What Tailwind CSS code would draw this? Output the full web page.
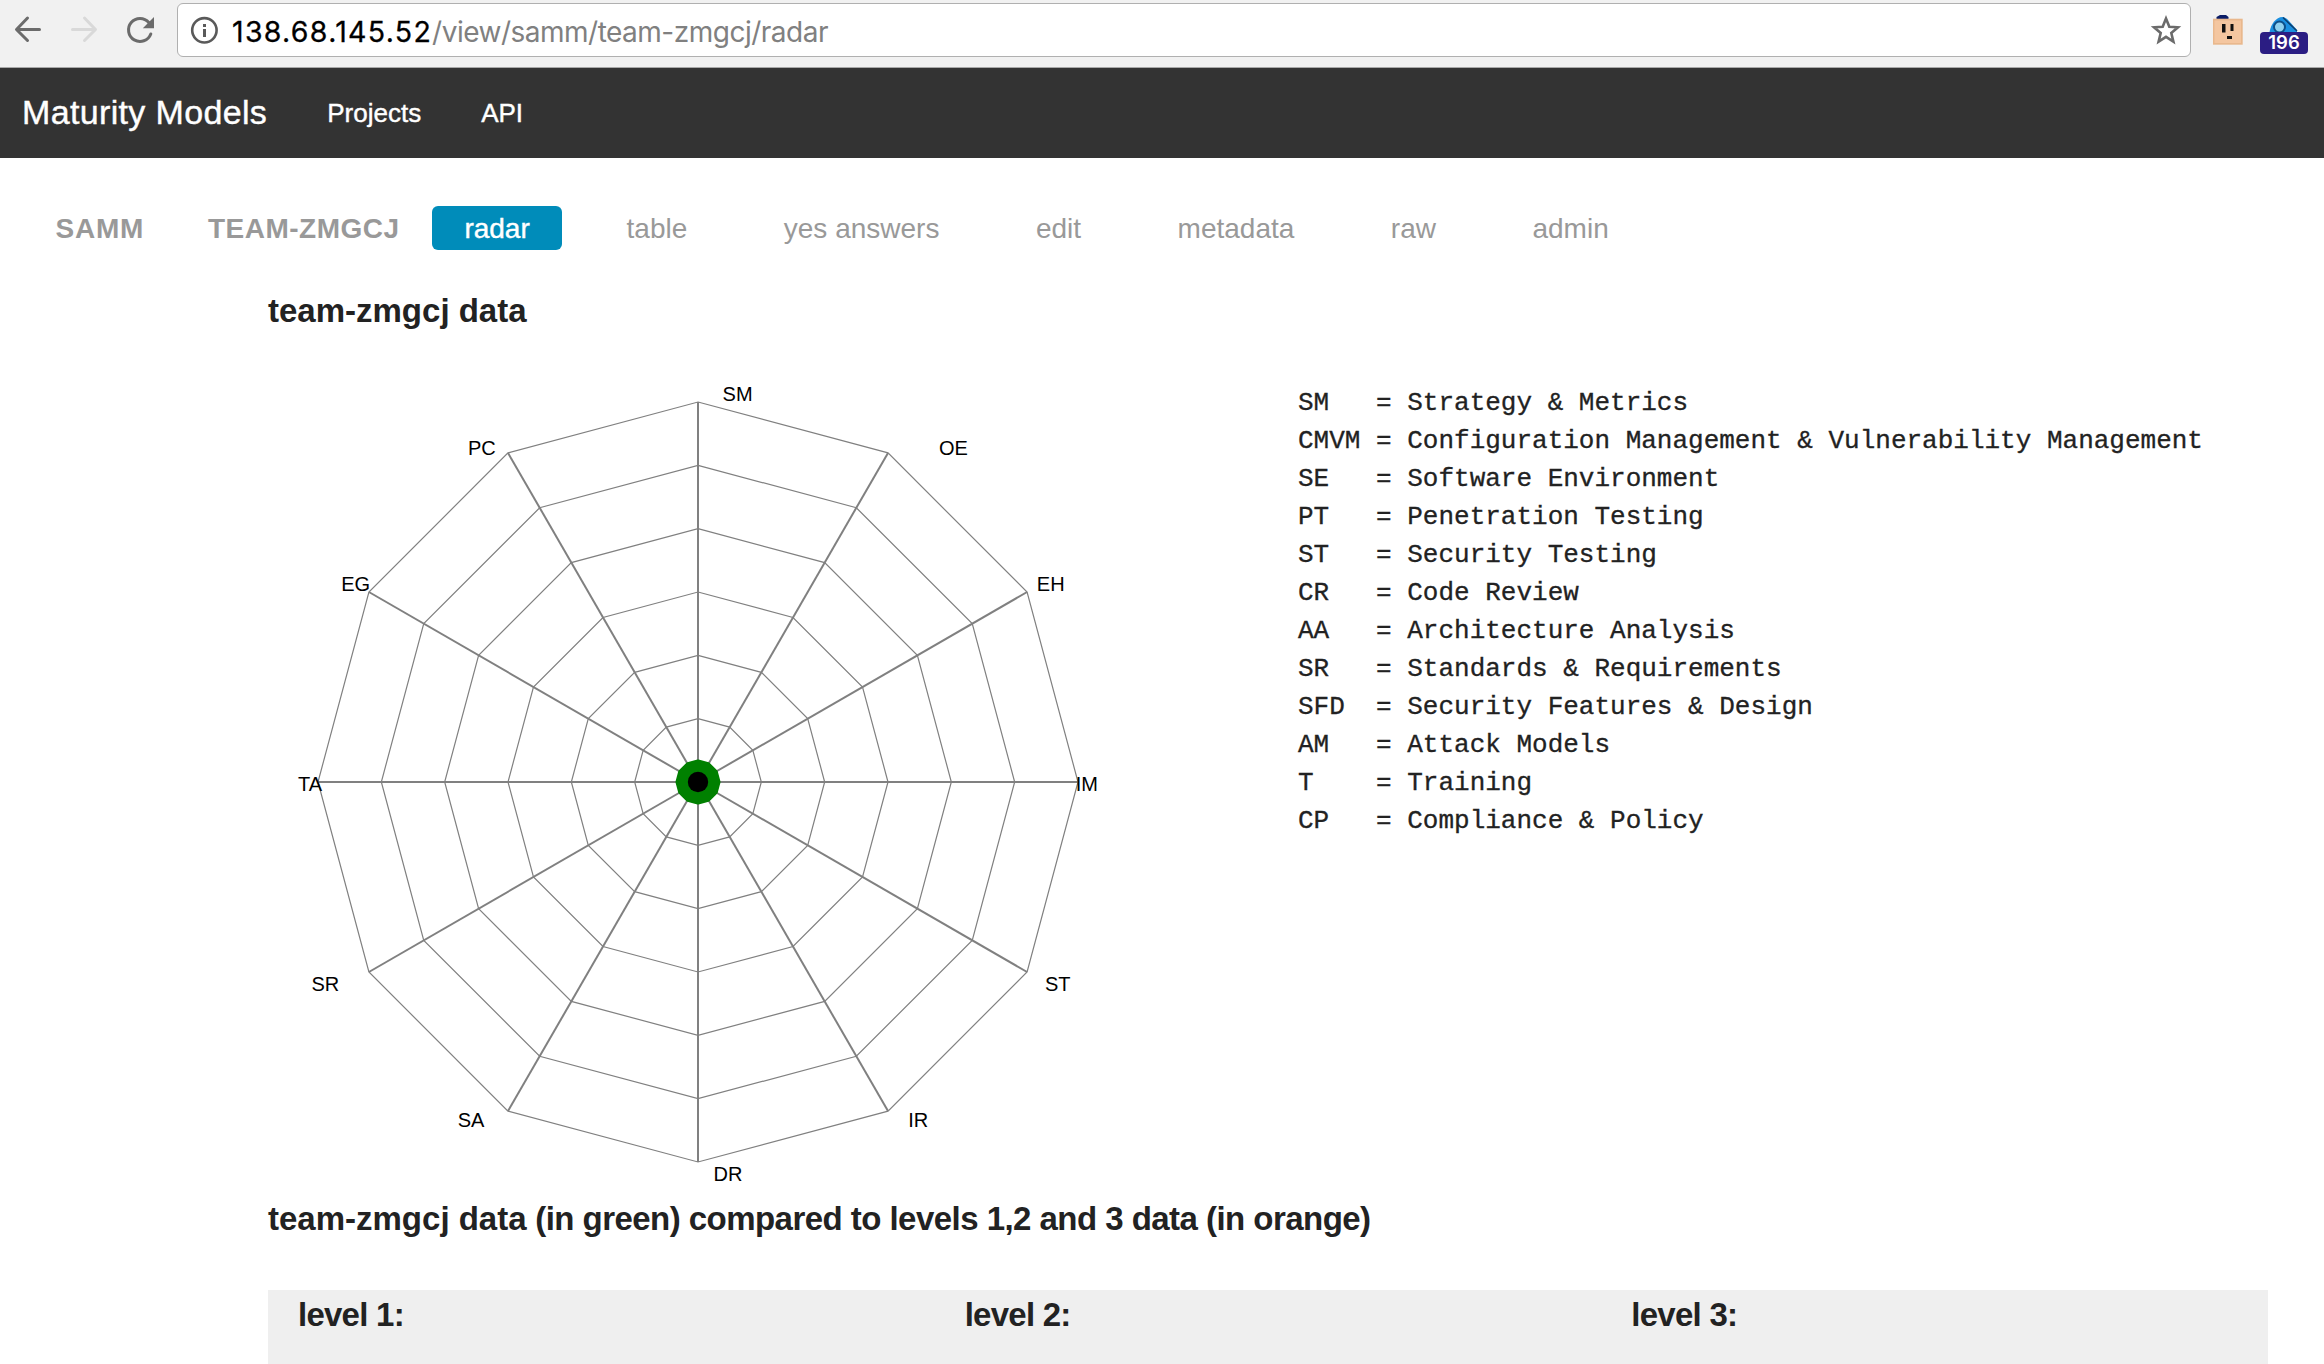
<!DOCTYPE html>
<html lang="en">
<head>
<meta charset="utf-8">
<title>Maturity Models</title>
<script src="https://cdn.jsdelivr.net/npm/@tailwindcss/browser@4"></script>
</head>
<body class="w-[2324px] h-[1364px] overflow-hidden bg-white font-['Liberation_Sans',Arial,sans-serif] text-[#222]">

<!-- Browser toolbar -->
<div class="flex h-[68px] items-start border-b border-[#a9a9a9] bg-[#f1f1f1]">
  <svg class="h-[60px] w-[177px] shrink-0" viewBox="0 0 177 60" fill="none" stroke="#6b6b6b" stroke-width="3" stroke-linecap="round" stroke-linejoin="round">
    <path d="M39.500 29.500H17M27.500 18L16.500 29.500L27.500 40.500"/>
    <path stroke="#d9d9d9" d="M72.500 29.500H95M84.500 18L95.500 29.500L84.500 40.500"/>
    <path d="M150.800 34A11.500 11.500 0 1 1 148.800 22.500"/>
    <path fill="#6b6b6b" stroke="none" d="M154 17V28.200H142.800Z"/>
  </svg>
  <div class="mt-[3px] flex h-[54px] w-[2014px] items-center rounded-md border border-[#b0b0b0] bg-white pl-3 pr-2">
    <svg class="h-7 w-7 shrink-0" viewBox="0 0 28 28"><circle cx="14.400" cy="14.300" r="12.200" fill="none" stroke="#5a5a5a" stroke-width="2.600"/><path fill="#5a5a5a" d="M13 8h3v3h-3zM13 13h3v8h-3z"/></svg>
    <div class="ml-[14px] pt-[3px] whitespace-pre font-['Inter',sans-serif] text-[28px] leading-[51px] tracking-[-0.5px] text-[#808080]"><span class="text-[28.500px] tracking-[1.3px] text-black [-webkit-text-stroke:0.3px_black]">138.68.145.52</span>/view/samm/team-zmgcj/radar</div>
    <svg class="ml-auto h-[32px] w-[32px]" viewBox="0 0 32 32"><path fill="none" stroke="#6b6b6b" stroke-width="2.600" d="M16 4.500L19.300 12.700L28 13.300L21.300 19L23.400 27.600L16 22.900L8.600 27.600L10.700 19L4 13.300L12.700 12.700Z"/></svg>
  </div>
  <svg class="ml-[21px] mt-[14px] h-8 w-8" viewBox="0 0 32 32"><path fill="#0b1c66" d="M4.500 3L8 1H14L16.500 3V6H4.500Z"/><path fill="#e9b88d" d="M1 4.700H30.700V30.700H1Z"/><path fill="#f4c6a0" d="M2.500 6.500H29V29H2.500Z"/><path fill="#111" d="M10 10h3.500v8.500H10zM18.500 10h3v7h-3zM15 22h5v3h-5z"/></svg>
  <div class="relative ml-[16px] mt-[15px] h-[40px] w-[52px]">
    <svg class="absolute left-2 top-0 h-5 w-9" viewBox="0 0 36 20"><path fill="#1a8fe0" d="M1.500 17C3 9 8 2 14.500 2C17 2 19 4 21 6L29 15V20H3Z"/><path stroke="#0c3f6e" stroke-width="1.500" d="M15 2.500L29 16"/><circle cx="11.500" cy="12" r="5.500" fill="#8fd0ee" stroke="#0c4f8a" stroke-width="2"/></svg>
    <div class="absolute left-0 top-[17px] flex h-[22px] w-[48px] items-center justify-center rounded-sm bg-[#2b1d83] font-['Inter',sans-serif] text-[18.500px] font-semibold text-white">196</div>
  </div>
</div>

<!-- Top bar -->
<nav class="flex h-[90px] items-center bg-[#333] pl-[22px] text-white [-webkit-text-stroke:0.4px_white]">
  <a class="text-[34px] leading-none tracking-[0.35px] pb-[2px]">Maturity Models</a>
  <a class="ml-[60px] text-[26px] leading-none">Projects</a>
  <a class="ml-[60px] text-[26px] leading-none">API</a>
</nav>

<!-- Section tabs -->
<div class="mt-12 flex h-11 items-center pl-[55.500px] text-[28px] leading-[44px] text-[#999]">
  <a class="pt-px font-bold tracking-[0.8px]">SAMM</a>
  <a class="ml-[63.700px] pt-px font-bold tracking-[0.5px]">TEAM-ZMGCJ</a>
  <div class="ml-[32.500px] flex h-11 gap-[32.500px] leading-[45px]">
    <a class="rounded-md bg-[#008cba] px-[32.300px] text-white [-webkit-text-stroke:0.4px_white]">radar</a>
    <a class="px-8">table</a>
    <a class="px-8">yes answers</a>
    <a class="px-8">edit</a>
    <a class="px-8">metadata</a>
    <a class="px-8">raw</a>
    <a class="px-8">admin</a>
  </div>
</div>

<main class="ml-[268px] w-[2000px]">
  <h2 class="mt-[37px] flex h-12 items-center text-[33px] font-bold">team-zmgcj data</h2>

  <div class="mt-[15px] flex h-[840px]">
    <svg class="h-[840px] w-[1000px] shrink-0 font-['Liberation_Sans',Arial,sans-serif] text-[20px]" viewBox="268 350 1000 840">
      <g id="grid" fill="none" stroke="#808080"></g>
      <g id="labels" fill="#000"></g>
    </svg>
    <pre class="mt-[34px] pl-[30px] font-['Liberation_Mono','Courier_New',monospace] text-[26px] leading-[38px] [-webkit-text-stroke:0.3px_#222]">SM   = Strategy &amp; Metrics
CMVM = Configuration Management &amp; Vulnerability Management
SE   = Software Environment
PT   = Penetration Testing
ST   = Security Testing
CR   = Code Review
AA   = Architecture Analysis
SR   = Standards &amp; Requirements
SFD  = Security Features &amp; Design
AM   = Attack Models
T    = Training
CP   = Compliance &amp; Policy</pre>
  </div>

  <h2 class="mt-[5px] h-12 whitespace-pre text-[33px] leading-[48px] font-bold">team-zmgcj data<span class="tracking-[-0.54px]"> (in green) compared to levels 1,2 and 3 data (in orange)</span></h2>

  <div class="mt-[47px] grid h-[80px] grid-cols-3 bg-[#efefef] pt-px text-[33px] font-bold leading-[48px] tracking-[-0.75px]">
    <div class="pl-[30px]">level 1:</div>
    <div class="pl-[30px]">level 2:</div>
    <div class="pl-[30px]">level 3:</div>
  </div>
</main>

<script>
  const cx = 698, cy = 782, R = 380, rings = 6, n = 12;
  const pt = (r, i) => {
    const a = i * 2 * Math.PI / n;
    return (cx + r * Math.sin(a)).toFixed(2) + ',' + (cy - r * Math.cos(a)).toFixed(2);
  };
  const poly = r => Array.from({ length: n }, (_, i) => pt(r, i)).join(' ');
  let g = '';
  for (let k = 1; k <= rings; k++) g += `<polygon points="${poly(R * k / rings)}" stroke-width="1.2"/>`;
  for (let i = 0; i < n; i++) g += `<path d="M${cx},${cy}L${pt(R, i)}" stroke-width="2"/>`;
  g += `<polygon points="${poly(20)}" fill="#008000" stroke="#008000" stroke-width="5" stroke-linejoin="round"/>`;
  g += `<circle cx="${cx}" cy="${cy}" r="10.2" fill="#000" stroke="none"/>`;
  document.getElementById('grid').innerHTML = g;
  const labels = [['SM', 722.6, 401], ['OE', 938.9, 455], ['EH', 1036.8, 591], ['IM', 1075.8, 791], ['ST', 1044.9, 991], ['IR', 908.2, 1127],
    ['DR', 713.5, 1181], ['SA', 457.7, 1127], ['SR', 311.4, 991], ['TA', 298, 791], ['EG', 341.2, 591], ['PC', 468, 455]];
  document.getElementById('labels').innerHTML = labels.map(([t, x, y]) => `<text x="${x}" y="${y}">${t}</text>`).join('');
</script>
</body>
</html>
